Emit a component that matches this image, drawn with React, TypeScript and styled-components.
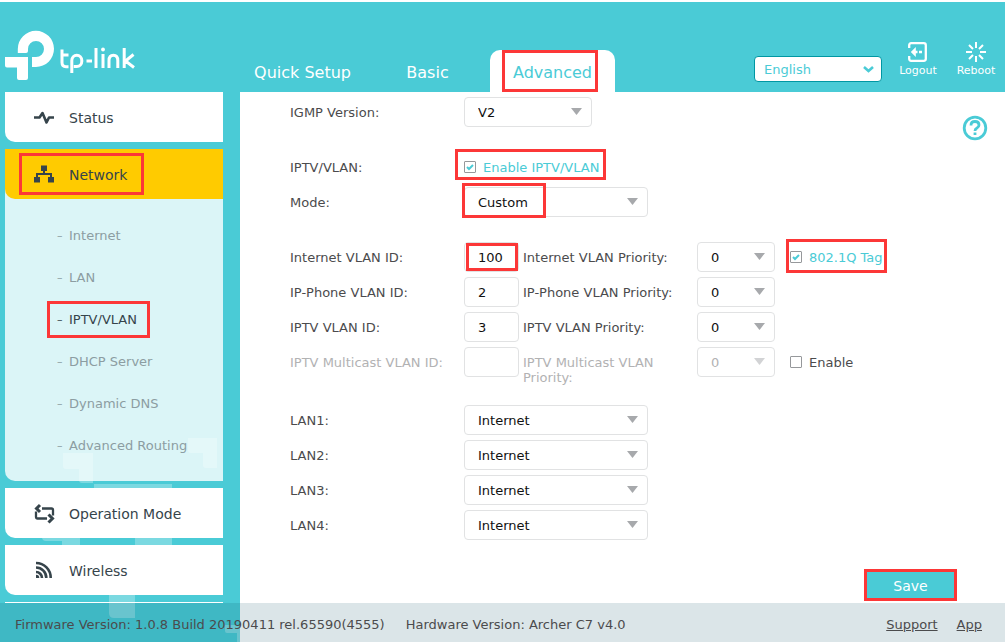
import React, { ReactNode, useId, useState } from 'react';
import styled, { createGlobalStyle, css } from 'styled-components';

const teal = '#4acbd6';
const ink = '#36444b';

const GlobalStyle = createGlobalStyle`
  *, *::before, *::after { box-sizing: border-box; }
  body { margin: 0; background: #fff; }
  body, button, input, select {
    font-family: Verdana, "DejaVu Sans", sans-serif;
    font-size: 13px;
    line-height: 15px;
    color: #4b4b4d;
  }
  a { color: inherit; text-decoration: none; }
`;

const Shell = styled.div`
  position: relative;
  display: flex;
  flex-direction: column;
  min-height: 100vh;
  border-top: 2px solid #fff;
  background: linear-gradient(to right, ${teal} 240px, #fff 240px);
`;

const Pattern = styled.svg`
  position: absolute;
  left: 0;
  top: 434px;
  width: 240px;
  height: 206px;
  fill: #fff;
`;

const Header = styled.header`
  display: flex;
  align-items: flex-end;
  height: 90px;
  padding-right: 9px;
  background: ${teal};
`;

const Brand = styled.a`
  flex: 0 0 240px;
  height: 64px;
  padding-left: 5px;
  svg { display: block; }
`;

const Tabs = styled.nav`
  display: flex;
  flex: 1;
`;

const Tab = styled.a<{ $active?: boolean }>`
  height: 42px;
  min-width: 125px;
  line-height: 46px;
  font-size: 16px;
  text-align: center;
  white-space: nowrap;
  border-radius: 10px 10px 0 0;
  color: ${p => (p.$active ? teal : '#fff')};
  background: ${p => (p.$active ? '#fff' : 'transparent')};
`;

const Tools = styled.div`
  display: flex;
  align-items: flex-end;
  padding-bottom: 10px;
`;

const Language = styled.div`
  position: relative;
  width: 128px;
  margin-right: 16px;
  select {
    display: block;
    appearance: none;
    width: 100%;
    height: 26px;
    padding: 0 9px;
    border: 1px solid #0097a3;
    border-radius: 4px;
    background: #fff;
    color: ${teal};
  }
  svg {
    position: absolute;
    right: 8px;
    top: 10px;
    pointer-events: none;
  }
`;

const Tool = styled.button`
  display: flex;
  flex-direction: column;
  align-items: center;
  min-width: 40px;
  margin-left: 18px;
  margin-bottom: 4px;
  padding: 0;
  border: 0;
  background: none;
  color: #fff;
  font-size: 11px;
  &:first-of-type { margin-left: 0; }
`;

const Body = styled.div`
  display: flex;
  flex: 1;
`;

const Sidebar = styled.nav`
  position: relative;
  flex: 0 0 240px;
  padding: 0 17px 0 5px;
`;

const panel = css`
  margin-bottom: 7px;
  border-radius: 0 0 0 10px;
`;

const MenuItem = styled.a<{ $active?: boolean }>`
  ${panel}
  position: relative;
  z-index: 1;
  display: flex;
  align-items: center;
  gap: 14px;
  height: 50px;
  padding: 2px 0 0 28px;
  font-size: 14px;
  line-height: 16px;
  color: ${ink};
  background: ${p => (p.$active ? '#ffcb00' : '#fff')};
`;

const Submenu = styled.ul`
  ${panel}
  margin-top: -17px;
  padding: 26px 0 14px;
  list-style: none;
  background: rgba(255, 255, 255, 0.8);
`;

const SubItem = styled.li<{ $active?: boolean }>`
  display: flex;
  height: 42px;
  padding-left: 52px;
  line-height: 42px;
  color: ${p => (p.$active ? ink : '#8c9da2')};
  &::before {
    content: '–';
    width: 12px;
    font-size: 11px;
  }
`;

const NextEdge = styled.div`
  height: 1px;
  background: #fff;
`;

const Content = styled.main`
  position: relative;
  flex: 1;
  padding: 5px 48px 0 50px;
`;

const Help = styled.button`
  position: absolute;
  top: 23px;
  right: 17px;
  padding: 0;
  border: 0;
  background: none;
  svg { display: block; }
`;

const Group = styled.div<{ $gap: number }>`
  display: grid;
  row-gap: 5px;
  margin-bottom: ${p => p.$gap}px;
`;

const Row = styled.div<{ $muted?: boolean }>`
  display: flex;
  align-items: flex-start;
  color: ${p => (p.$muted ? '#b2b2b3' : 'inherit')};
`;

const Label = styled.label`
  flex: 0 0 174px;
  padding-top: 8px;
`;

const PriorityLabel = styled(Label)`
  margin-left: 4px;
  padding-right: 20px;
`;

const Picker = styled.div<{ $width: number }>`
  position: relative;
  width: ${p => p.$width}px;
  select {
    display: block;
    appearance: none;
    width: 100%;
    height: 30px;
    padding: 0 13px;
    border: 1px solid #e1e2e3;
    border-radius: 4px;
    background: #fff;
    color: #111;
    opacity: 1;
  }
  select:disabled { color: #b2b2b3; }
  select:disabled + svg { opacity: 0.5; }
  svg {
    position: absolute;
    right: 10px;
    top: 11px;
    pointer-events: none;
  }
`;

const IdInput = styled.input`
  display: block;
  width: 55px;
  height: 30px;
  padding: 0 13px;
  border: 1px solid #e1e2e3;
  border-radius: 4px;
  background: #fff;
  color: #111;
`;

const Check = styled.label<{ $on: boolean }>`
  display: flex;
  align-items: center;
  gap: 7px;
  height: 30px;
  white-space: nowrap;
  color: ${p => (p.$on ? teal : '#4b4b4d')};
  input {
    appearance: none;
    width: 12px;
    height: 12px;
    margin: 0;
    border: 1px solid #96989b;
    border-radius: 1px;
    background: #fff;
  }
  input:checked {
    background: #fff url("data:image/svg+xml,%3Csvg xmlns='http://www.w3.org/2000/svg' viewBox='0 0 10 10'%3E%3Cpath d='M2 5l2 2 4-4' fill='none' stroke='%234acbd6' stroke-width='2'/%3E%3C/svg%3E") center / 10px 10px;
  }
`;

const Slot = styled.div`
  margin-left: 15px;
`;

const Marked = styled.span<{ $inset: string }>`
  position: relative;
  display: inline-block;
  &::after {
    content: '';
    position: absolute;
    inset: ${p => p.$inset};
    border: 3px solid #fc3737;
    pointer-events: none;
  }
`;

const Actions = styled.div`
  display: flex;
  justify-content: flex-end;
`;

const SaveButton = styled.button`
  display: block;
  width: 93px;
  height: 32px;
  padding: 2px 0 0;
  border: 0;
  background: ${teal};
  color: #fff;
  font-size: 14px;
  line-height: 16px;
`;

const Footer = styled.footer`
  position: relative;
  display: flex;
  align-items: center;
  gap: 21px;
  height: 39px;
  padding: 3px 23px 0 15px;
  background: rgba(0, 72, 94, 0.14);
  white-space: nowrap;
`;

const FooterLinks = styled.div`
  display: flex;
  gap: 19px;
  margin-left: auto;
  a { text-decoration: underline; }
`;

const Logo = () => (
  <svg width="132" height="54" viewBox="0 0 132 54" role="img" aria-label="tp-link">
    <path fill="#fff" d="M12.800 25V21a18.100 18.100 0 1 1 18.100 18H27V29h4a8 8 0 1 0-8-8v2a2 2 0 0 1-2 2z" />
    <path fill="#fff" d="M0 29h23v21a2 2 0 0 1-2 2h-7a2 2 0 0 1-2-2V39.500H2a2 2 0 0 1-2-2z" />
    <g fill="none" stroke="#fff" strokeWidth="3">
      <path d="M57 21.500v13q0 4.200 4 4.200h2.500M57 27h6.500" />
      <path d="M66.800 45V32.500a5 5.300 0 0 1 10 0v.8a5 5.300 0 0 1-5 5.300h-3" />
      <path d="M81.500 33h5.500M91 20v20M98 26v14M104 40v-7.500q0-5.300 4.400-5.300t4.400 5.300V40M119.200 20v20M128.500 26.500l-8 6.500 8.500 6.500" />
    </g>
    <circle cx="98" cy="21.500" r="1.900" fill="#fff" />
  </svg>
);

const Triangle = () => (
  <svg width="11" height="7" viewBox="0 0 11 7" aria-hidden="true">
    <path d="M0 0h11L5.500 7z" fill="#a7a9ac" />
  </svg>
);

const StatusIcon = () => (
  <svg width="22" height="22" viewBox="0 0 22 22" fill="none" stroke={ink} strokeWidth="2.600" aria-hidden="true">
    <path d="M1 10.500h5.500l3-4.500 4 9.500 2.500-5h5" strokeLinejoin="round" />
  </svg>
);

const NetworkIcon = () => (
  <svg width="22" height="22" viewBox="0 0 22 22" fill={ink} aria-hidden="true">
    <path d="M8 1.500h6v5.500h-2v2h7v4h2v5.500h-6V13h2v-2H5v2h2v5.500H1V13h2V9h7V7H8z" />
  </svg>
);

const ModeIcon = () => (
  <svg width="22" height="22" viewBox="0 0 22 22" fill="none" stroke={ink} strokeWidth="2.300" aria-hidden="true">
    <path d="M9 5.500h9.500q1.500 0 1.500 1.500v5.500M14 15.500H4.500Q3 15.500 3 14V8.500" />
    <path d="M7 2L3.500 5.500 7 9M15.500 11.500l4 4-4 4" strokeWidth="3" />
  </svg>
);

const WirelessIcon = () => (
  <svg width="22" height="22" viewBox="0 0 22 22" fill="none" stroke={ink} strokeWidth="2.600" aria-hidden="true">
    <path d="M3 3A14.700 14.700 0 0 1 17.700 18M3 7.500A10.300 10.300 0 0 1 13.300 18M3 12a6 6 0 0 1 6 6" />
    <path d="M3 14.700A3.300 3.300 0 0 1 6.300 18H3z" fill={ink} stroke="none" />
  </svg>
);

type PickProps = { id?: string; value: string; width: number; disabled?: boolean };

const Pick = ({ id, value, width, disabled }: PickProps) => (
  <Picker $width={width}>
    <select id={id} disabled={disabled} defaultValue={value}>
      <option>{value}</option>
    </select>
    <Triangle />
  </Picker>
);

const CheckBox = ({ children, initial = false }: { children: ReactNode; initial?: boolean }) => {
  const [on, setOn] = useState(initial);
  return (
    <Check $on={on}>
      <input type="checkbox" checked={on} onChange={e => setOn(e.target.checked)} />
      {children}
    </Check>
  );
};

type VlanProps = { name: string; vlan: string; muted?: boolean; marked?: boolean; children?: ReactNode };

const VlanRow = ({ name, vlan, muted, marked, children }: VlanProps) => {
  const id = useId();
  const input = <IdInput id={`${id}-vlan`} defaultValue={vlan} disabled={muted} />;
  return (
    <Row $muted={muted}>
      <Label htmlFor={`${id}-vlan`}>{name} VLAN ID:</Label>
      {marked ? <Marked $inset="1px 1px 1px 2px">{input}</Marked> : input}
      <PriorityLabel htmlFor={`${id}-priority`}>{name} VLAN Priority:</PriorityLabel>
      <Pick id={`${id}-priority`} value="0" width={78} disabled={muted} />
      <Slot>{children}</Slot>
    </Row>
  );
};

const submenu = ['Internet', 'LAN', 'IPTV/VLAN', 'DHCP Server', 'Dynamic DNS', 'Advanced Routing'];
const currentPage = 'IPTV/VLAN';
const ports = ['LAN1', 'LAN2', 'LAN3', 'LAN4'];

export default function App() {
  return (
    <>
      <GlobalStyle />
      <Shell>
        <Pattern viewBox="0 436 240 206" aria-hidden="true">
          <g opacity="0.27">
            <path d="M188 438h29v30h-11q-3 0-3-3v-12h-12q-3 0-3-3z" />
            <path d="M63 453h30v30h-11q-3 0-3-3v-11h-13q-3 0-3-3z" />
            <path d="M94 484h78v78h-37v-40H94z" />
            <path d="M42 505h38v60H62v-24H46q-4 0-4-4z" />
            <path d="M109 580h26v38h-21q-5 0-5-5z" />
            <path d="M225 625h15v17h-3v-9h-10q-2 0-2-2z" />
          </g>
        </Pattern>
        <Header>
          <Brand href="#"><Logo /></Brand>
          <Tabs>
            <Tab href="#">Quick Setup</Tab>
            <Tab href="#">Basic</Tab>
            <Tab href="#" $active><Marked $inset="0 -6px 4px -11px">Advanced</Marked></Tab>
          </Tabs>
          <Tools>
            <Language>
              <select aria-label="Language" defaultValue="English"><option>English</option></select>
              <svg width="11" height="7" viewBox="0 0 11 7" fill="none" stroke={teal} strokeWidth="2.600" aria-hidden="true">
                <path d="M1 1l4.500 4L10 1" />
              </svg>
            </Language>
            <Tool>
              <svg width="22" height="22" viewBox="0 0 22 22" fill="none" stroke="#fff" strokeWidth="2.300" aria-hidden="true">
                <path d="M2.200 7V4.200q0-2 2-2h12.600q2 0 2 2v13.600q0 2-2 2H4.200q-2 0-2-2V15" />
                <path d="M7 11h3.500M12 11h3" />
                <path d="M3.800 11l5-5v10z" fill="#fff" stroke="none" />
              </svg>
              Logout
            </Tool>
            <Tool>
              <svg width="22" height="22" viewBox="0 0 22 22" fill="none" stroke="#fff" strokeWidth="2" aria-hidden="true">
                <path d="M11 1v6M11 15v6M1 11h6M15 11h6M4 4l4 4M14 14l4 4M18 4l-4 4M8 14l-4 4" />
              </svg>
              Reboot
            </Tool>
          </Tools>
        </Header>
        <Body>
          <Sidebar>
            <MenuItem href="#"><StatusIcon />Status</MenuItem>
            <MenuItem href="#" $active>
              <NetworkIcon />
              <Marked $inset="-14px -17px -12px -50px">Network</Marked>
            </MenuItem>
            <Submenu>
              {submenu.map(name => (
                <SubItem key={name} $active={name === currentPage}>
                  <a href="#">
                    {name === currentPage ? <Marked $inset="2px -13px 3px -22px">{name}</Marked> : name}
                  </a>
                </SubItem>
              ))}
            </Submenu>
            <MenuItem href="#"><ModeIcon />Operation Mode</MenuItem>
            <MenuItem href="#"><WirelessIcon />Wireless</MenuItem>
            <NextEdge />
          </Sidebar>
          <Content>
            <Help aria-label="Help">
              <svg width="26" height="26" viewBox="0 0 26 26" fill="none" stroke={teal} strokeWidth="2.800" aria-hidden="true">
                <circle cx="13" cy="13" r="10.800" />
                <path d="M9 10.500q0-4 4-4t4 3.500q0 2-2 3t-2 3" />
                <path d="M13 17.500v2.500" />
              </svg>
            </Help>
            <Group $gap={25}>
              <Row>
                <Label htmlFor="igmp">IGMP Version:</Label>
                <Pick id="igmp" value="V2" width={128} />
              </Row>
            </Group>
            <Group $gap={25}>
              <Row>
                <Label as="span">IPTV/VLAN:</Label>
                <Marked $inset="-3px -7px 2px -9px"><CheckBox initial>Enable IPTV/VLAN</CheckBox></Marked>
              </Row>
              <Row>
                <Label htmlFor="mode">Mode:</Label>
                <Marked $inset="-4px 102px -1px -2px"><Pick id="mode" value="Custom" width={184} /></Marked>
              </Row>
            </Group>
            <Group $gap={20}>
              <VlanRow name="Internet" vlan="100" marked>
                <Marked $inset="-3px -4px -1px -4px"><CheckBox initial>802.1Q Tag</CheckBox></Marked>
              </VlanRow>
              <VlanRow name="IP-Phone" vlan="2" />
              <VlanRow name="IPTV" vlan="3" />
              <VlanRow name="IPTV Multicast" vlan="" muted>
                <CheckBox>Enable</CheckBox>
              </VlanRow>
            </Group>
            <Group $gap={29}>
              {ports.map(port => (
                <Row key={port}>
                  <Label htmlFor={port}>{port}:</Label>
                  <Pick id={port} value="Internet" width={184} />
                </Row>
              ))}
            </Group>
            <Actions>
              <Marked $inset="0"><SaveButton>Save</SaveButton></Marked>
            </Actions>
          </Content>
        </Body>
        <Footer>
          <span>Firmware Version: 1.0.8 Build 20190411 rel.65590(4555)</span>
          <span>Hardware Version: Archer C7 v4.0</span>
          <FooterLinks>
            <a href="#">Support</a>
            <a href="#">App</a>
          </FooterLinks>
        </Footer>
      </Shell>
    </>
  );
}
